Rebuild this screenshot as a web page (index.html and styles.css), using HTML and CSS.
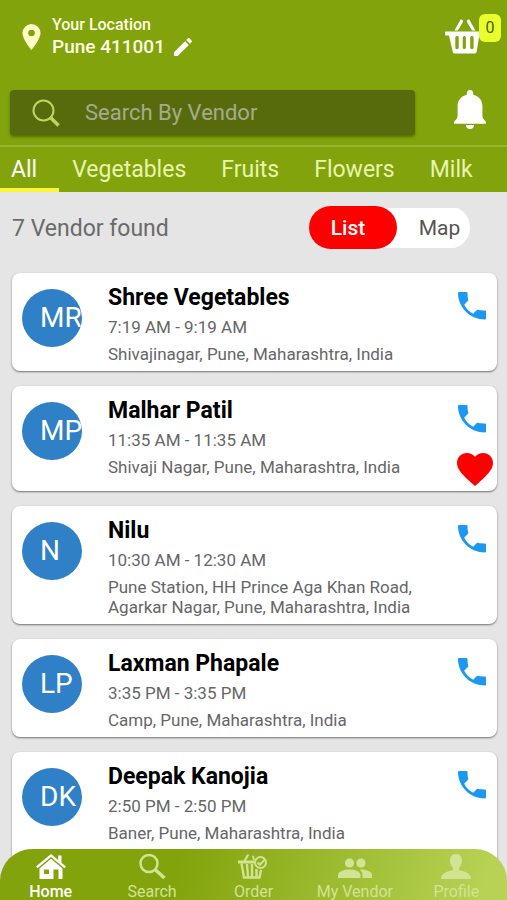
FILE: index.html
```html
<!DOCTYPE html>
<html lang="en">
<head>
<meta charset="utf-8">
<meta name="viewport" content="width=device-width, initial-scale=1">
<title>Vendors</title>
<link rel="stylesheet" href="styles.css">
</head>
<body>
<svg class="sprite" aria-hidden="true">
  <symbol id="phone" viewBox="0 0 28 28"><path d="M1 0h7.500q1 0 1 1c0 3 .3 5 .9 7.200L6.200 12.700c2 4 5 7 9 9.100l3.600-3.700q.6-.5 1.400-.4c2.200.6 4.200.8 6.800.8q1 0 1 1V26.500q0 1-1 1C12 27.500 0 15.500 0 1q0-1 1-1z"/></symbol>
</svg>
<div class="app">
  <header class="top">
    <div class="location-row">
      <svg class="pin" viewBox="0 0 18 26" aria-hidden="true"><path fill-rule="evenodd" d="M9 0a9 9 0 0 0-9 9c0 6.500 9 17 9 17s9-10.500 9-17a9 9 0 0 0-9-9zm0 5.700a3.300 3.300 0 1 1 0 6.600 3.300 3.300 0 0 1 0-6.600z"/></svg>
      <div class="location">
        <span class="location-label">Your Location</span>
        <span class="location-value">Pune 411001
          <button class="edit" aria-label="Edit location"><svg viewBox="3 3 18 18"><path d="M3 17.250V21h3.750L17.810 9.940l-3.750-3.750L3 17.250zM20.710 7.040a1 1 0 0 0 0-1.410l-2.340-2.340a1 1 0 0 0-1.410 0l-1.830 1.830 3.750 3.750 1.830-1.830z"/></svg></button>
        </span>
      </div>
      <button class="cart" aria-label="Basket">
        <svg viewBox="0 0 36 35"><path d="M15.600.6a1.900 1.900 0 0 1 2.400 2.500L12.800 11.500H9.500zM24.300.6a1.900 1.900 0 0 0-2.400 2.500l5.200 8.400h3.300z"/><path fill-rule="evenodd" d="M1 12.500h34a1 1 0 0 1 1 1v2a1 1 0 0 1-1 1h-.7L31.600 33a2 2 0 0 1-2 1.600H9.800a2 2 0 0 1-2-1.600L4 16.500H1a1 1 0 0 1-1-1v-2a1 1 0 0 1 1-1zM11.800 17a1.500 1.500 0 0 0-1.500 1.500v10a1.500 1.500 0 0 0 3.400 0v-10A1.500 1.500 0 0 0 11.800 17zm7.500 0a1.600 1.600 0 0 0-1.600 1.500v10a1.600 1.600 0 0 0 3.200 0v-10a1.600 1.600 0 0 0-1.600-1.500zm7.500 0a1.600 1.600 0 0 0-1.600 1.500v10a1.600 1.600 0 0 0 3.400 0v-10a1.600 1.600 0 0 0-1.800-1.500z"/></svg>
        <span class="badge">0</span>
      </button>
    </div>
    <div class="search-row">
      <label class="search">
        <svg viewBox="0 0 28 28" aria-hidden="true"><circle cx="11.500" cy="11.500" r="10"/><path d="M18.500 18.500l8 8" stroke-width="3.500"/></svg>
        <input type="text" placeholder="Search By Vendor" aria-label="Search By Vendor">
      </label>
      <button class="bell" aria-label="Notifications"><svg viewBox="0 0 32 39"><path d="M16 0a3.200 3.200 0 0 1 3.200 3.600v1.200C25 6.200 28.400 10.500 28.400 16v9.500c0 2.500 1.300 4.300 3.200 5.700.6.600.5 2.600-.4 2.600H.8c-.9 0-1-2-.4-2.600 1.900-1.400 3.200-3.200 3.200-5.700V16c0-5.500 3.400-9.800 9.200-11.200V3.600A3.200 3.200 0 0 1 16 0zM12 35h8a4 3.900 0 0 1-8 0z"/></svg></button>
    </div>
    <nav class="tabs" aria-label="Categories">
      <a class="active" href="#all">All</a>
      <a href="#vegetables">Vegetables</a>
      <a href="#fruits">Fruits</a>
      <a href="#flowers">Flowers</a>
      <a href="#milk">Milk</a>
    </nav>
  </header>

  <main class="content">
    <div class="summary">
      <h1>7 Vendor found</h1>
      <div class="toggle">
        <button class="on" aria-pressed="true">List</button>
        <button aria-pressed="false">Map</button>
      </div>
    </div>
    <ul class="vendors">
      <li class="card">
        <div class="avatar">MR</div>
        <div class="info"><h2>Shree Vegetables</h2><p class="hours">7:19 AM - 9:19 AM</p><p>Shivajinagar, Pune, Maharashtra, India</p></div>
        <div class="actions"><button class="call" aria-label="Call"><svg viewBox="0 0 28 28"><use href="#phone"/></svg></button></div>
      </li>
      <li class="card">
        <div class="avatar">MP</div>
        <div class="info"><h2>Malhar Patil</h2><p class="hours">11:35 AM - 11:35 AM</p><p>Shivaji Nagar, Pune, Maharashtra, India</p></div>
        <div class="actions"><button class="call" aria-label="Call"><svg viewBox="0 0 28 28"><use href="#phone"/></svg></button>
        <button class="heart" aria-label="Favourite"><svg viewBox="2 3 20 18.350"><path d="M12 21.350l-1.450-1.320C5.400 15.360 2 12.280 2 8.500 2 5.420 4.420 3 7.500 3c1.740 0 3.410.81 4.500 2.090C13.090 3.810 14.760 3 16.500 3 19.580 3 22 5.420 22 8.500c0 3.780-3.400 6.860-8.550 11.540L12 21.350z"/></svg></button></div>
      </li>
      <li class="card">
        <div class="avatar">N</div>
        <div class="info"><h2>Nilu</h2><p class="hours">10:30 AM - 12:30 AM</p><p>Pune Station, HH Prince Aga Khan Road, Agarkar Nagar, Pune, Maharashtra, India</p></div>
        <div class="actions"><button class="call" aria-label="Call"><svg viewBox="0 0 28 28"><use href="#phone"/></svg></button></div>
      </li>
      <li class="card">
        <div class="avatar">LP</div>
        <div class="info"><h2>Laxman Phapale</h2><p class="hours">3:35 PM - 3:35 PM</p><p>Camp, Pune, Maharashtra, India</p></div>
        <div class="actions"><button class="call" aria-label="Call"><svg viewBox="0 0 28 28"><use href="#phone"/></svg></button></div>
      </li>
      <li class="card">
        <div class="avatar">DK</div>
        <div class="info"><h2>Deepak Kanojia</h2><p class="hours">2:50 PM - 2:50 PM</p><p>Baner, Pune, Maharashtra, India</p></div>
        <div class="actions"><button class="call" aria-label="Call"><svg viewBox="0 0 28 28"><use href="#phone"/></svg></button></div>
      </li>
    </ul>
  </main>

  <nav class="bottom" aria-label="Main">
    <a class="active" href="#home"><svg viewBox="0 0 30 25"><path d="M15 0L0 12.600l1.500 1.700L15 3l13.500 11.300 1.500-1.700-4.500-3.800V1.500h-3.300V6z"/><path fill-rule="evenodd" d="M15 4.800L3.500 14.500V25h14v-9.500h5V25h4V14.500zM8 15.500h5v4.500H8z"/></svg>Home</a>
    <a href="#search"><svg viewBox="0 0 28 25"><circle cx="11" cy="9.500" r="8.500" fill="none" stroke="currentColor" stroke-width="2.500"/><path d="M17 15.500l9.500 8.500" stroke="currentColor" stroke-width="3.500"/></svg>Search</a>
    <a href="#order"><svg viewBox="0 0 30 25"><path d="M9 .5h2.500L8 6.500H5.500zM14 1.500l2 .5 1 4h-2zM0 6.500h16v3H0z"/><path d="M3.500 9.500L6 23.500h15.500L23 16M9 10l1 13M14 10v13M18.500 15v8" fill="none" stroke="currentColor" stroke-width="2.400"/><circle cx="22.500" cy="8.500" r="5.500" fill="none" stroke="currentColor" stroke-width="2"/><path d="M19.500 8.500l2.300 2.300 5-5.200" fill="none" stroke="currentColor" stroke-width="2"/></svg>Order</a>
    <a href="#my-vendor"><svg class="wide" viewBox="0 0 34 25"><circle cx="11.500" cy="9" r="4.600"/><circle cx="23" cy="9" r="4.600"/><path d="M0 24v-3c0-3.500 6-5.500 11.500-5.500S22.500 17.500 22.500 21v3zM24.500 24v-3c0-2.200-1-4-2.800-5.400C27.500 15.500 34 17.500 34 21v3z"/></svg>My Vendor</a>
    <a href="#profile"><svg viewBox="0 0 30 25"><path d="M15 0c4 0 6 2.700 6 6.500 0 3.700-1.700 6-3 7.300V16c3 1.300 12 2 12 9H0c0-7 9-7.700 12-9v-2.200C10.700 12.500 9 10.200 9 6.500 9 2.700 11 0 15 0z"/></svg>Profile</a>
  </nav>
</div>
</body>
</html>
```
FILE: styles.css
```css
* { box-sizing: border-box; margin: 0; padding: 0; }

body {
  font-family: Roboto, "Liberation Sans", sans-serif;
  background: #e5e5e5;
}

button { border: 0; background: none; font: inherit; color: inherit; cursor: pointer; }
button svg { display: block; width: 100%; fill: currentColor; }
a { color: inherit; text-decoration: none; }
.sprite { position: absolute; width: 0; height: 0; }

.app { position: relative; display: flex; flex-direction: column; height: 100vh; overflow: hidden; }

.top { flex: none; background: #82a30b; color: #fff; }

.location-row { display: flex; align-items: flex-start; padding: 14px 6px 0 22px; height: 90px; }
.pin { width: 19px; height: 26px; margin-top: 10px; fill: #feffc4; }
.location { flex: 1; display: flex; flex-direction: column; margin-left: 11px; color: #feffe0; font-weight: 500; }
.location-label { font-size: 16px; line-height: 22px; }
.location-value { display: flex; align-items: center; gap: 9px; font-size: 19px; line-height: 22px; }
.edit { width: 18px; color: #fff; }
.cart { position: relative; width: 56px; height: 40px; padding-top: 5px; }
.cart svg { width: 36px; height: 35px; }
.badge {
  position: absolute; top: 0; right: 0;
  width: 22px; border-radius: 6px;
  background: #e9ff2b; color: #4b5a00;
  font-size: 16px; line-height: 28px;
}

.search-row { display: flex; align-items: flex-start; padding: 0 21px 0 10px; }
.search {
  flex: 1; display: flex; align-items: center; height: 45px;
  padding-left: 22px; border-radius: 4px;
  background: #586b0c; box-shadow: 0 2px 3px rgba(40, 60, 0, .5);
}
.search svg { flex: none; width: 28px; height: 28px; fill: none; stroke: #bdd562; stroke-width: 2; }
.search input {
  flex: 1; min-width: 0; margin-left: 25px; border: 0; outline: 0;
  background: none; color: #fff; font: inherit; font-size: 22px;
}
.search input::placeholder { color: #a5ab8f; opacity: 1; }
.bell { width: 32px; margin-left: 39px; }

.tabs { display: flex; margin-top: 10px; border-top: 2px solid #98b32f; font-size: 23px; color: #e8f5ae; }
.tabs a { padding: 0 17px 0 18px; line-height: 45px; }
.tabs a.active { padding: 0 22px 0 11px; color: #fff; box-shadow: inset 0 -4px #fbf53a; }
.tabs a.active + a { padding-left: 13px; }

.content { flex: 1; min-height: 0; overflow-y: auto; scrollbar-width: none; padding: 14px 10px 60px 12px; }
.summary { display: flex; align-items: center; justify-content: space-between; padding-right: 27px; }
.summary h1 { font-size: 23px; line-height: 28px; padding-top: 2px; font-weight: 400; color: #6a6a6a; }
.toggle {
  display: flex; align-items: center; width: 161px; height: 43px; color: #555; font-size: 21px;
  background: linear-gradient(#fff, #fff) center / 100% 40px no-repeat; border-radius: 22px;
}
.toggle button { flex: 1; height: 43px; padding-left: 12px; }
.toggle .on { flex: none; width: 88px; padding: 0 10px 0 0; border-radius: 22px; background: #f00; color: #fff; font-weight: 500; }

.vendors { list-style: none; display: flex; flex-direction: column; gap: 15px; margin-top: 24px; }
.card {
  display: flex; padding: 10px 5px 7px 10px; background: #fff; border-radius: 8px;
  box-shadow: 0 1px 2px rgba(0, 0, 0, .5);
}
.card:last-child { padding-bottom: 30px; }
.avatar {
  flex: none; width: 60px; height: 58px; margin-top: 6px; padding-left: 18px;
  border-radius: 50%; overflow: hidden; background: #2f80c6; color: #fff;
  font-size: 28px; line-height: 58px; white-space: nowrap;
}
.info { flex: 1; min-width: 0; margin-left: 26px; font-size: 17px; line-height: 20px; color: #666; }
.info h2 { margin-bottom: 4px; font-size: 23px; line-height: 30px; font-weight: 700; color: #000; }
.hours { margin-bottom: 7px; }
.actions { flex: none; width: 40px; display: flex; flex-direction: column; align-items: center; gap: 20px; padding-top: 9px; }
.call { width: 28px; color: #1c98f0; }
.heart { width: 36px; margin: 0 -6px -2px 0; color: #f00; }

.bottom {
  position: absolute; left: 0; right: 0; bottom: 0;
  display: grid; grid-template-columns: repeat(5, 1fr); height: 51px; padding-top: 5px;
  border-radius: 32px 32px 0 0; overflow: hidden;
  background: linear-gradient(105deg, #82a30b 35%, #b7d254 95%);
  color: #d3e394; font-size: 16px; line-height: 20px;
}
.bottom a { display: flex; flex-direction: column; align-items: center; gap: 3px; white-space: nowrap; }
.bottom svg { width: 30px; height: 25px; fill: currentColor; }
.bottom .wide { width: 34px; }
.bottom .active { color: #fff; font-weight: 500; }
```
